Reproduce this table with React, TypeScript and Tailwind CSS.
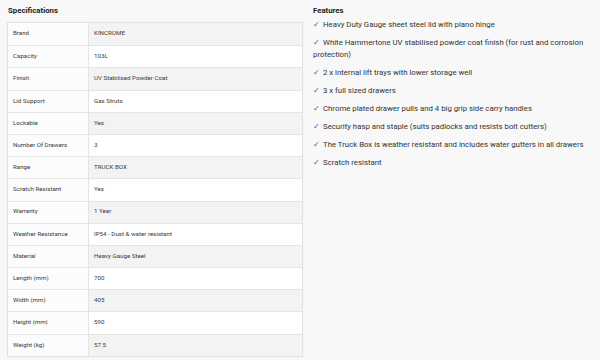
const specs: [string, string][] = [
  ['Brand', 'KINCROME'],
  ['Capacity', '103L'],
  ['Finish', 'UV Stabilised Powder Coat'],
  ['Lid Support', 'Gas Struts'],
  ['Lockable', 'Yes'],
  ['Number Of Drawers', '3'],
  ['Range', 'TRUCK BOX'],
  ['Scratch Resistant', 'Yes'],
  ['Warranty', '1 Year'],
  ['Weather Resistance', 'IP54 - Dust & water resistant'],
  ['Material', 'Heavy Gauge Steel'],
  ['Length (mm)', '700'],
  ['Width (mm)', '405'],
  ['Height (mm)', '590'],
  ['Weight (kg)', '57.5'],
];

const features = [
  'Heavy Duty Gauge sheet steel lid with piano hinge',
  'White Hammertone UV stabilised powder coat finish (for rust and corrosion protection)',
  '2 x internal lift trays with lower storage well',
  '3 x full sized drawers',
  'Chrome plated drawer pulls and 4 big grip side carry handles',
  'Security hasp and staple (suits padlocks and resists bolt cutters)',
  'The Truck Box is weather resistant and includes water gutters in all drawers',
  'Scratch resistant',
];

export default function App() {
  return (
    <div className="w-[600px] h-[360px] bg-[#f8f8f8] flex gap-[10px] px-[7px] pt-[5px] text-[#333] font-['Roboto',sans-serif] overflow-hidden">
      {/* Specifications */}
      <div className="w-[296px] shrink-0">
        <h3 className="text-[7.8px] font-bold leading-[12px] mb-[5px] pl-[1px] text-[#222]">Specifications</h3>
        <div className="border border-[#e2e2e2] bg-white shadow-[0_0_1px_rgba(0,0,0,0.08)]">
          {specs.map(([label, value], i) => (
            <div
              key={label}
              className={`flex h-[22.2px] items-center text-[6.2px] text-[#3a3a3a] ${i % 2 === 0 ? 'bg-[#f3f3f3]' : 'bg-white'} ${i > 0 ? 'border-t border-[#e4e4e4]' : ''}`}
            >
              <div className="w-[81px] h-full flex items-center pl-[5px] border-r border-[#e4e4e4] bg-[#fcfcfc]">{label}</div>
              <div className="flex-1 pl-[5px]">{value}</div>
            </div>
          ))}
        </div>
      </div>

      {/* Features */}
      <div className="flex-1">
        <h3 className="text-[7.8px] font-bold leading-[12px] text-[#222]">Features</h3>
        <ul className="flex flex-col gap-[6px] mt-[2px] pr-[2px]">
          {features.map((f) => (
            <li key={f} className="text-[7.8px] leading-[12px] text-[#333]">
              <span className="text-[#2f62b5] mr-[3px]">✓</span>
              {f}
            </li>
          ))}
        </ul>
      </div>
    </div>
  );
}
